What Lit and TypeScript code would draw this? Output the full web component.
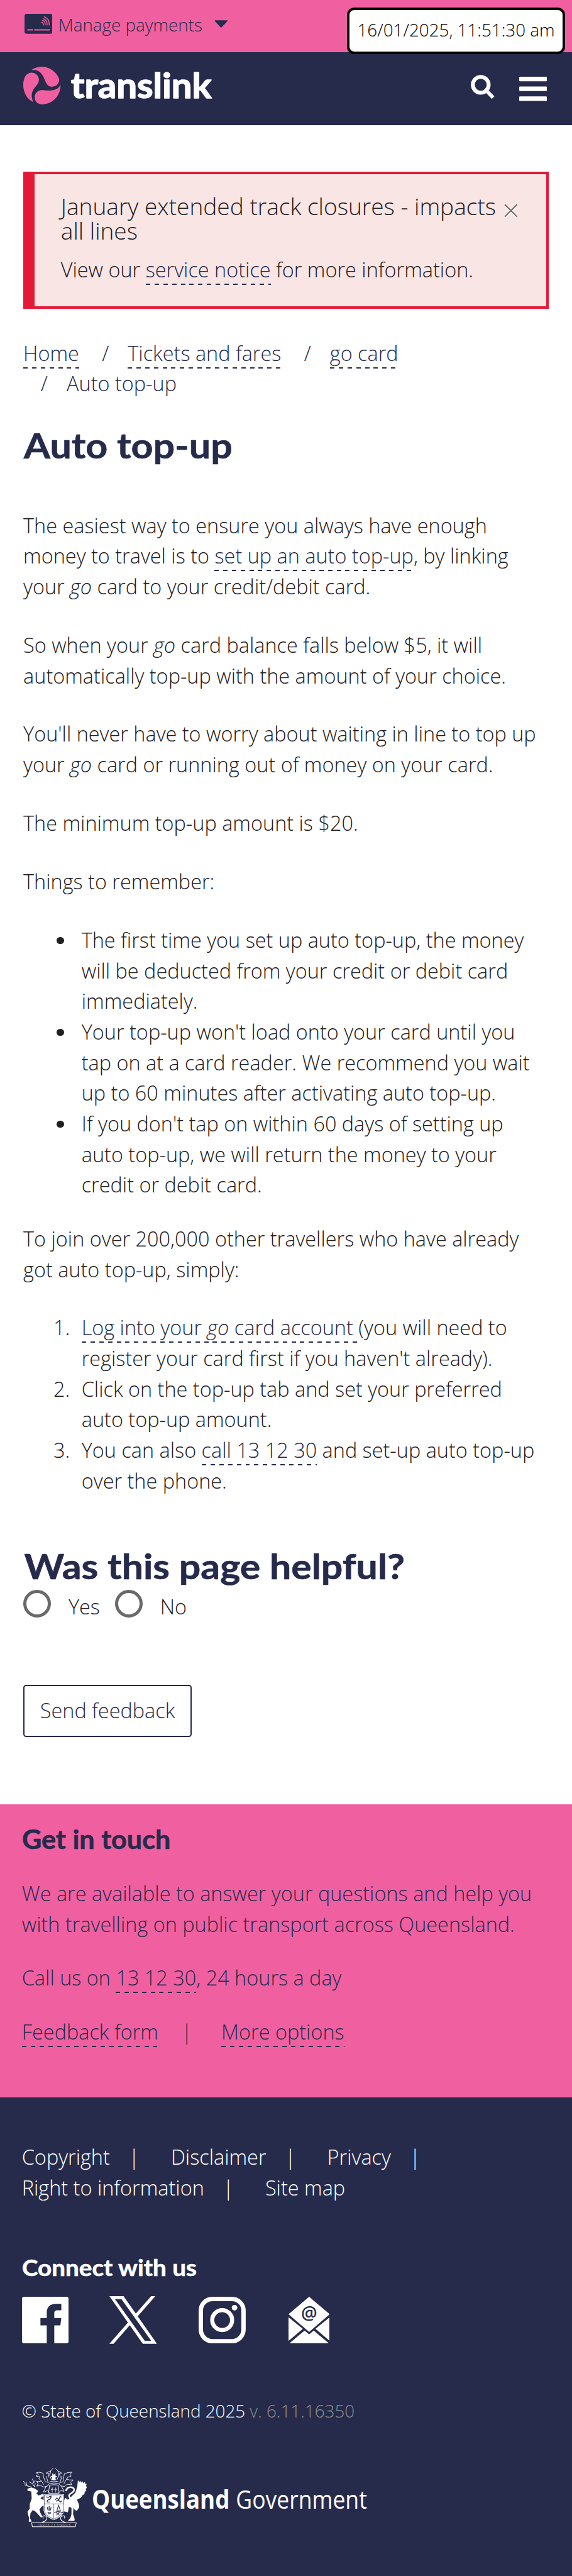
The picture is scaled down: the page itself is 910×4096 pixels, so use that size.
import { LitElement, html, svg, css, unsafeCSS } from "lit";
import { customElement } from "lit/decorators.js";

// Design units are defined on a 1179x5304 artboard and rendered at 910x4096.
const SCALE = 4096 / 5304;
const u = (n: number) => unsafeCSS(`${+(n * SCALE).toFixed(3)}px`);

const cardIcon = svg`
  <rect width="58" height="41" rx="4.5" fill="#262b4c"/>
  <g fill="none" stroke="#f060a0" stroke-width="1.9" stroke-linecap="round">
    <path d="M6.5 33H17M21 33H51.500" stroke-width="2.5"/>
    <path d="M40.500 6Q51.500 9 50.700 23M39 10Q47.500 13 46.500 23M37 13.500Q43.500 15 42.500 23M35 17.200Q39.300 18.500 38.500 23"/>
  </g>`;

const swirl = svg`
  <g fill="#f060a0">
    <path d="M197 428C218 416 238 411 262 411C312 411 356 450 367 487C370 512 350 534 322 534C301 534 290 520 281 500C264 455 245 426 197 431Z"/>
    <path d="M241 491C241 466 221 447 195 447C160 447 144 484 144 524C144 570 168 612 206 629C186 583 200 556 225 528C235 516 241 508 241 491Z"/>
    <path d="M375 521C357 562 316 559 262 555C234 554 215 575 215 602C217 630 240 643 264 643C330 640 378 586 375 521Z"/>
  </g>`;

const crest = svg`
  <g fill="none" stroke="#fff" stroke-width="3.500" stroke-linejoin="round" stroke-linecap="round">
    <path d="M238 68L224 84L218 112L228 140M252 68L268 84L274 112L262 140M222 84L194 98L214 100L208 124M270 84L292 98L276 100L284 124"/>
    <path d="M176 98L150 92L134 96L148 106L132 116L158 120L150 132L166 146L150 150L136 148L146 162L138 178L160 174L180 184L206 176L216 162"/>
    <path d="M176 98L180 124L190 150L210 156M166 146L180 168M308 102L330 94L356 92L342 104L350 116L328 124L322 134L338 140L362 140L348 156L352 170L326 166L308 180L284 176L274 162"/>
    <path d="M308 102L304 124L300 150L278 158M322 134L306 162M196 118L206 148M292 118L284 148"/>
    <path d="M196 178L178 216L204 206L216 218M290 178L306 210L286 206L270 222"/>
    <path d="M220 150Q243 142 268 150M218 162Q243 154 270 162M216 172Q243 166 272 172M216 176L210 222H276L270 176"/>
    <path d="M233 188V216M226 198H240M255 188V216M248 198H262" stroke-width="3"/>
    <path d="M122 180L112 164L118 150L110 134M112 164L92 152M106 184L84 178L64 162L56 148M84 178L62 170M74 170L72 154M118 158L128 144M124 182L128 162"/>
    <path d="M318 204L328 190Q350 178 366 192Q376 210 344 226Q330 238 346 254" stroke-width="10"/>
    <path d="M178 376Q170 362 184 360Q206 364 198 384Q190 396 170 402M308 376Q316 360 298 362Q280 366 286 384Q296 398 314 402" stroke-width="4"/>
    <path d="M106 404H382L376 429H110Z" stroke-width="4"/>
  </g>
  <g fill="#fff">
    <path d="M232 98L243 108L254 98L252 112L264 120L252 126L256 140H230L234 126L222 120L234 112Z"/>
    <path d="M80 194L104 186L128 194L146 208L140 218L134 220L148 236L176 226L180 238L160 252L182 266V298L168 304L154 322L160 344L174 368L164 372L142 348L126 332L112 326L98 348L96 376L106 398H88L90 376L80 336L94 318L94 288L106 256L104 212L80 206Z"/>
    <path d="M314 250L330 262L348 246L376 218L388 180L392 142L402 152L406 144L412 156L420 148L424 158L436 152L436 164L446 164L442 178L448 186L440 196L444 206L434 214L432 228L420 234L412 248L398 256L386 262L398 290L400 308L386 330L374 326L364 312L362 352L372 382L370 392L330 392L346 374L352 350V312L336 306L330 340L306 334L302 300L308 262Z"/>
    <path d="M180 228H306V330Q300 366 243 388Q186 366 180 330Z"/>
  </g>
  <g fill="none" stroke="#262b4c" stroke-width="3">
    <path d="M180 288H306M243 288V386M184 232H302V328Q296 360 243 382Q190 360 184 328Z" stroke-width="2.500"/>
    <path d="M202 308L208 328M214 302V330M226 308L222 328M204 340H226M206 348H224" stroke-width="5"/>
    <path d="M272 296L262 330H284ZM246 342Q268 328 300 344M258 340L278 358M278 340L258 358" stroke-width="4"/>
    <path d="M196 242Q206 254 218 242L226 240Q226 262 208 262Q198 268 204 276H218M252 262L262 252L274 262L282 242L290 246M256 272L270 264L284 276L292 270" stroke-width="5"/>
  </g>
  <text x="144" y="423" font-family="Open Sans, sans-serif" font-size="17" fill="#fff" textLength="202">AUDAX AT FIDELIS</text>`;

@customElement("app-root")
export class AppRoot extends LitElement {
  static styles = css`
    :host {
      display: block;
      width: 910px;
      height: 4096px;
      overflow: hidden;
      box-sizing: border-box;
      background: #fff;
      color: #1f2022;
      font: 300 ${u(42)} / ${u(63)} "Open Sans", "Noto Sans", sans-serif;
    }
    * { box-sizing: border-box; }
    svg { display: block; flex: none; }
    p, h1, h2, h3, ul, ol { margin: 0; padding: 0; }
    a {
      color: #262b4c;
      text-decoration: none;
      padding-bottom: ${u(3)};
      background: repeating-linear-gradient(90deg, #262b4c 0 ${u(9)}, transparent ${u(9)} ${u(18)}) left bottom / 100% ${u(3)} no-repeat;
    }
    h1, h2, h3, .word { font-family: Lato, "Open Sans", sans-serif; font-weight: 700; }
    h1, h2, h3 { color: #262b4c; }
    h1 svg, h2 svg, h3 svg {
      height: 100%;
      overflow: visible;
      fill: currentColor;
      stroke: currentColor;
      stroke-width: 0.8px;
      stroke-linejoin: round;
    }

    .utility {
      position: relative;
      height: ${u(108)};
      background: #f060a0;
      color: #262b4c;
      display: flex;
      align-items: flex-start;
      padding-left: ${u(50)};
      font-size: ${u(36)};
      line-height: ${u(54)};
    }
    .card { width: ${u(58)}; height: ${u(41)}; margin-top: ${u(29)}; }
    .manage { margin: ${u(25)} ${u(25)} 0 ${u(12)}; }
    .caret { width: ${u(28)}; height: ${u(16)}; margin-top: ${u(41.5)}; }
    .clock {
      position: absolute;
      z-index: 2;
      left: ${u(715)};
      top: ${u(15)};
      width: ${u(449)};
      height: ${u(96)};
      border: ${u(6)} solid #000;
      border-radius: ${u(15)};
      background: #fff;
      color: #000;
      text-align: center;
      white-space: nowrap;
      line-height: ${u(82)};
    }
    .bar {
      height: ${u(150)};
      background: #262b4c;
      border-bottom: 1px solid #1d2140;
      display: flex;
      align-items: flex-start;
      padding: ${u(29)} ${u(52)} 0 ${u(48)};
    }
    .swirl { width: ${u(77)}; height: ${u(78)}; }
    .word { width: ${u(292)}; height: ${u(78)}; margin-left: ${u(20)}; overflow: visible; }
    .search { width: ${u(50)}; height: ${u(50)}; margin: ${u(17)} ${u(50)} 0 auto; }
    .menu { width: ${u(57)}; height: ${u(50)}; margin-top: ${u(21)}; }

    main { height: ${u(3457)}; padding: ${u(96)} ${u(48)} 0; }
    .alert {
      height: ${u(282)};
      border: ${u(6)} solid #e41937;
      border-left-width: ${u(24)};
      background: #f9e5e4;
      padding: ${u(40.5)} ${u(54)} 0;
      display: flex;
      white-space: nowrap;
    }
    .alert-title { font-size: ${u(48)}; line-height: ${u(50.4)}; margin-bottom: ${u(24.6)}; }
    .alert-text { width: ${u(913)}; flex: none; }
    .close { width: ${u(28)}; height: ${u(32)}; margin-top: ${u(18)}; overflow: visible; }
    .crumbs { color: #262b4c; padding-top: ${u(60.5)}; white-space: nowrap; }
    .slash { margin: 0 ${u(39)} 0 ${u(47)}; }
    .slash.first { margin-left: ${u(36)}; }
    h1 { height: ${u(72)}; margin: ${u(58.7)} 0 ${u(97.8)}; }
    .copy p { margin-bottom: ${u(57.4)}; white-space: nowrap; }
    .copy .before-ol { margin-bottom: ${u(56.5)}; }
    ul, ol { list-style: none; }
    ul { margin-bottom: ${u(48.4)}; }
    li { display: flex; white-space: nowrap; }
    .dot { flex: none; width: ${u(15)}; height: ${u(15)}; border-radius: 50%; background: #1f2022; margin: ${u(24)} ${u(36)} 0 ${u(69)}; }
    .num { flex: none; width: ${u(120)}; padding-right: ${u(24)}; text-align: right; }
    h2 { height: ${u(78)}; margin-top: ${u(103.6)}; }
    .choices { display: flex; padding-top: ${u(11)}; height: ${u(206.5)}; }
    .radio { width: ${u(57)}; height: ${u(57)}; border: ${u(6.5)} solid #696969; border-radius: 50%; }
    .choices label { margin: ${u(3.5)} ${u(31)} 0 ${u(36)}; }
    .send {
      display: block;
      width: ${u(347)};
      height: ${u(107.500)};
      padding: 0;
      border: 2px solid #262b4c;
      border-radius: ${u(6)};
      background: #fff;
      color: #262b4c;
      font: inherit;
      line-height: ${u(99)};
    }

    .contact { height: ${u(603)}; background: #f060a0; color: #262b4c; padding: ${u(42)} ${u(45)} 0; white-space: nowrap; }
    .contact h3 { height: ${u(60)}; margin-bottom: ${u(51)}; }
    .contact p { margin-bottom: ${u(48)}; }
    .pipe { margin: 0 ${u(60)} 0 ${u(47)}; }

    footer { height: ${u(986)}; background: #262b4c; color: #fff; padding: ${u(93)} ${u(45)} 0; white-space: nowrap; }
    footer .pipe { margin: 0 ${u(64.5)} 0 ${u(38.5)}; }
    footer h3 { color: #fff; height: ${u(54)}; margin-top: ${u(104)}; }
    .social { display: flex; align-items: center; height: ${u(98)}; margin-top: ${u(33)}; }
    .fb { width: ${u(96)}; height: ${u(96)}; margin-right: ${u(84)}; }
    .x { width: ${u(98)}; height: ${u(98)}; margin-right: ${u(86)}; }
    .ig { width: ${u(97)}; height: ${u(96)}; margin-right: ${u(88)}; }
    .mail { width: ${u(85)}; height: ${u(96)}; }
    .legal { font-size: ${u(36)}; line-height: ${u(54)}; margin-top: ${u(111)}; }
    .version { color: #8d8d8d; }
    .gov { display: flex; margin: ${u(91)} 0 0 ${u(3)}; }
    .crest { width: ${u(131.300)}; height: ${u(122)}; }
    .govname { width: ${u(570)}; height: ${u(122)}; margin-left: ${u(10)}; overflow: visible; }
  `;

  private fitted(text: string, size: number, box: number, baseline: number, x: number, measure: number) {
    return html`<svg viewBox="0 0 ${measure + 10} ${box}" preserveAspectRatio="xMinYMin meet">
      <text x=${x} y=${baseline} font-size=${size} textLength=${measure} lengthAdjust="spacingAndGlyphs">${text}</text>
    </svg>`;
  }

  render() {
    return html`
      <div class="utility">
        <svg class="card" viewBox="0 0 58 41">${cardIcon}</svg>
        <span class="manage">Manage payments</span>
        <svg class="caret" viewBox="0 0 28 16"><path d="M2 1.500H26L14 14Z" fill="#262b4c" stroke="#262b4c" stroke-width="2.500" stroke-linejoin="round"/></svg>
        <div class="clock">16/01/2025, 11:51:30 am</div>
      </div>
      <header class="bar">
        <svg class="swirl" viewBox="144 410 232 234" preserveAspectRatio="none">${swirl}</svg>
        <svg class="word" viewBox="0 0 292 78">
          <text x="1" y="65" font-size="73" textLength="290" lengthAdjust="spacingAndGlyphs" fill="#fff" stroke="#fff" stroke-width="2" stroke-linejoin="round">translink</text>
        </svg>
        <svg class="search" viewBox="0 0 50 50" fill="none" stroke="#fff">
          <circle cx="20.500" cy="20.500" r="16.300" stroke-width="8"/>
          <path d="M34.500 35L46 47" stroke-width="7.500"/>
        </svg>
        <svg class="menu" viewBox="0 0 57 50" fill="#fff">
          <rect width="57" height="9.500" rx="1.500"/><rect y="20" width="57" height="9.500" rx="1.500"/><rect y="40.500" width="57" height="9.500" rx="1.500"/>
        </svg>
      </header>

      <main>
        <div class="alert">
          <div class="alert-text">
            <div class="alert-title">January extended track closures - impacts<br>all lines</div>
            <p>View our <a>service notice</a> for more information.</p>
          </div>
          <svg class="close" viewBox="0 0 28 32" fill="none" stroke-width="2.600">
            <path d="M1.500 6L26.500 31M26.500 6L1.500 31" stroke="#fff"/>
            <path d="M1.500 3L26.500 28M26.500 3L1.500 28" stroke="#6d6765"/>
          </svg>
        </div>

        <nav class="crumbs">
          <a>Home</a><span class="slash">/</span><a>Tickets and fares</a><span class="slash">/</span><a>go card</a><br>
          <span class="slash first">/</span>Auto top-up
        </nav>

        <h1>${this.fitted("Auto top-up", 72, 72, 63.500, 1, 430)}</h1>
        <section class="copy">
          <p>The easiest way to ensure you always have enough<br>money to travel is to <a>set up an auto top-up</a>, by linking<br>your <i>go</i> card to your credit/debit card.</p>
          <p>So when your <i>go</i> card balance falls below $5, it will<br>automatically top-up with the amount of your choice.</p>
          <p>You'll never have to worry about waiting in line to top up<br>your <i>go</i> card or running out of money on your card.</p>
          <p>The minimum top-up amount is $20.</p>
          <p>Things to remember:</p>
          <ul>
            <li><span class="dot"></span><span>The first time you set up auto top-up, the money<br>will be deducted from your credit or debit card<br>immediately.</span></li>
            <li><span class="dot"></span><span>Your top-up won't load onto your card until you<br>tap on at a card reader. We recommend you wait<br>up to 60 minutes after activating auto top-up.</span></li>
            <li><span class="dot"></span><span>If you don't tap on within 60 days of setting up<br>auto top-up, we will return the money to your<br>credit or debit card.</span></li>
          </ul>
          <p class="before-ol">To join over 200,000 other travellers who have already<br>got auto top-up, simply:</p>
          <ol>
            <li><span class="num">1.</span><span><a>Log into your <i>go</i> card account </a>(you will need to<br>register your card first if you haven't already).</span></li>
            <li><span class="num">2.</span><span>Click on the top-up tab and set your preferred<br>auto top-up amount.</span></li>
            <li><span class="num">3.</span><span>You can also <a>call 13 12 30</a> and set-up auto top-up<br>over the phone.</span></li>
          </ol>
        </section>

        <h2>${this.fitted("Was this page helpful?", 73, 78, 67.200, 2, 784)}</h2>
        <div class="choices">
          <span class="radio"></span><label>Yes</label>
          <span class="radio"></span><label>No</label>
        </div>
        <button class="send">Send feedback</button>
      </main>

      <section class="contact">
        <h3>${this.fitted("Get in touch", 54, 60, 51, 0, 306)}</h3>
        <p>We are available to answer your questions and help you<br>with travelling on public transport across Queensland.</p>
        <p>Call us on <a>13 12 30</a>, 24 hours a day</p>
        <div><a>Feedback form</a><span class="pipe">|</span><a>More options</a></div>
      </section>

      <footer>
        <div>Copyright<span class="pipe">|</span>Disclaimer<span class="pipe">|</span>Privacy<span class="pipe">|</span><br>Right to information<span class="pipe">|</span>Site map</div>
        <h3>${this.fitted("Connect with us", 48, 54, 45.700, 0, 360)}</h3>
        <div class="social">
          <svg class="fb" viewBox="0 0 96 96">
            <rect width="96" height="96" rx="4.500" fill="#fff"/>
            <path d="M51 96V59H38V44H51V33C51 21 58 14.700 70 14.700H81V28H73.500C68 28 66.500 30 66.500 35V44H81L79 59H66.500V96Z" fill="#262b4c"/>
          </svg>
          <svg class="x" viewBox="0 0 1200 1227" preserveAspectRatio="none">
            <path fill="#fff" d="M714.163 519.284L1160.890 0H1055.030L667.137 450.887L357.328 0H0L468.492 681.821L0 1226.370H105.866L515.491 750.218L842.672 1226.370H1200L714.137 519.284ZM569.165 687.828L521.697 619.934L144.011 79.694H306.615L611.412 515.685L658.880 583.579L1055.080 1150.300H892.476L569.165 687.854Z"/>
          </svg>
          <svg class="ig" viewBox="0 0 97 96" fill="none" stroke="#fff">
            <rect x="4.500" y="4.500" width="88" height="87" rx="24" stroke-width="9"/>
            <circle cx="48.500" cy="48" r="20.500" stroke-width="8.500"/>
            <circle cx="74" cy="22.500" r="5.800" fill="#fff" stroke="none"/>
          </svg>
          <svg class="mail" viewBox="0 0 85 96" fill="#fff">
            <path d="M42.500 0L85 36L42.500 72.500L0 36ZM0 42L29.500 66L0 91ZM85 42L55.500 66L85 91ZM3 95L33 69.500L42.500 77.500L52 69.500L82 95Q81 96 80 96H5Q4 96 3 95Z"/>
            <text x="42.500" y="47" text-anchor="middle" font-family="Open Sans, sans-serif" font-weight="600" font-size="37" fill="#262b4c">@</text>
          </svg>
        </div>
        <div class="legal">© State of Queensland 2025 <span class="version">v. 6.11.16350</span></div>
        <div class="gov">
          <svg class="crest" viewBox="54 65 394 366" preserveAspectRatio="none">${crest}</svg>
          <svg class="govname" viewBox="0 0 570 122" font-family="Open Sans, sans-serif" fill="#fff">
            <text x="0" y="84" font-size="53" font-weight="700" textLength="284" lengthAdjust="spacingAndGlyphs">Queensland</text>
            <text x="297" y="84" font-size="53" font-weight="400" textLength="270" lengthAdjust="spacingAndGlyphs">Government</text>
          </svg>
        </div>
      </footer>
    `;
  }
}
